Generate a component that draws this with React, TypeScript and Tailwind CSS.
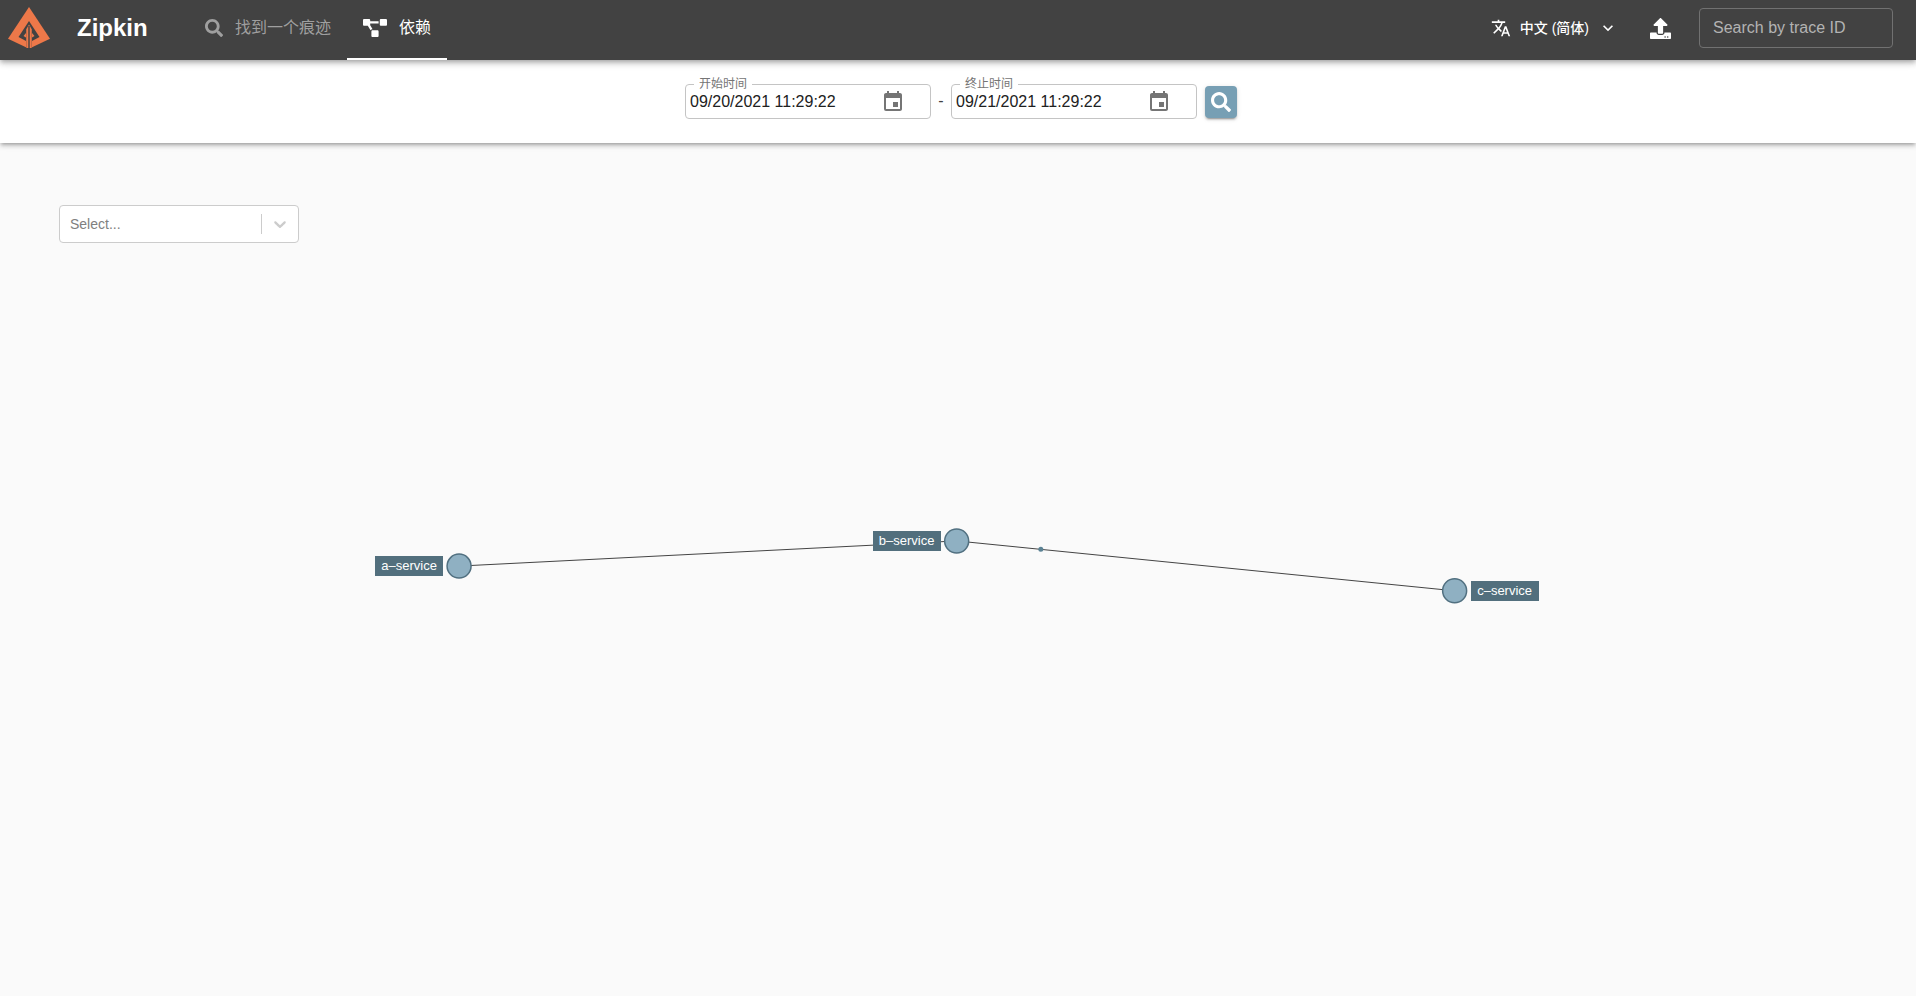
import { FaProjectDiagram, FaSearch, FaUpload } from "react-icons/fa";
import { MdEvent, MdExpandMore, MdTranslate } from "react-icons/md";

type ServiceNode = { name: string; x: number; y: number; side: "left" | "right" };

const nodes: ServiceNode[] = [
  { name: "a–service", x: 23.96, y: 49.6, side: "left" },
  { name: "b–service", x: 49.93, y: 46.65, side: "left" },
  { name: "c–service", x: 75.92, y: 52.5, side: "right" },
];

const edges: [number, number][] = [
  [0, 1],
  [1, 2],
];

function Logo() {
  return (
    <svg viewBox="0 0 42 42" className="h-[42px] w-[42px] shrink-0" aria-hidden="true">
      <path fill="#ed7849" d="M21 0 L42 31.8 L22.5 41 H19.5 L0 31.8 Z" />
      <path fill="#424242" d="M21 14 L31.5 30 L24 34 V30.5 L26.5 29 L24 26 V41 H23.4 V22 H18.6 V41 H18 V26 L15.5 29 L18 30.5 V34 L10.5 30 Z" />
      <path fill="#ed7849" d="M21 17.5 L23.6 22 V41 H18.4 V22 Z" />
      <path fill="#424242" d="M20.3 19 H21.7 V41 H20.3 Z" />
    </svg>
  );
}

function DateField({ id, label, value }: { id: string; label: string; value: string }) {
  return (
    <fieldset className="w-[246px] rounded border border-[#c4c4c4] px-1 pb-1">
      <legend className="ml-1 px-[5px] text-xs leading-3 text-[#757575]">
        <label htmlFor={id} className="block">{label}</label>
      </legend>
      <div className="flex h-6 items-center justify-between pr-[21px]">
        <input id={id} defaultValue={value} className="w-40 bg-transparent text-base text-[#212121] outline-none" />
        <button type="button" aria-label={label} className="text-[#757575]">
          <MdEvent size={24} />
        </button>
      </div>
    </fieldset>
  );
}

function Header() {
  return (
    <header className="relative z-20 flex h-[60px] items-stretch bg-[#424242] pr-[23px] pl-2 text-white shadow-[0_2px_4px_-1px_rgba(0,0,0,0.2),0_4px_5px_0_rgba(0,0,0,0.14),0_1px_10px_0_rgba(0,0,0,0.12)]">
      <div className="flex items-center pb-1">
        <Logo />
        <h1 className="ml-[27px] w-28 text-2xl font-bold">Zipkin</h1>
      </div>
      <nav className="flex flex-1 text-base">
        <a href="#find" className="flex items-center gap-3 px-4 pb-1 text-[#9f9f9f]">
          <FaSearch size={18} />
          找到一个痕迹
        </a>
        <a href="#dependency" className="flex items-center gap-3 border-b-2 border-white px-4 pb-0.5">
          <FaProjectDiagram size={24} className="h-[18px] w-6" preserveAspectRatio="none" />
          依赖
        </a>
      </nav>
      <div className="flex items-center pb-1">
        <button type="button" className="flex items-center gap-[9px] text-sm font-medium">
          <MdTranslate size={20} />
          <span>中文 (简体)</span>
          <MdExpandMore size={20} />
        </button>
        <button type="button" aria-label="Upload" className="mr-7 ml-8">
          <FaUpload size={21} />
        </button>
        <input
          aria-label="Search by trace ID"
          placeholder="Search by trace ID"
          className="h-10 w-[194px] rounded border border-[#717171] bg-transparent px-[13px] text-base outline-none placeholder:text-[#b3b3b3]"
        />
      </div>
    </header>
  );
}

function ServiceFilter() {
  return (
    <div className="relative z-10 h-[38px] w-60">
      <select
        aria-label="Service"
        defaultValue=""
        className="h-full w-full appearance-none rounded border border-[#cccccc] bg-white px-2.5 text-sm text-[#808080] outline-none"
      >
        <option value="">Select...</option>
        {nodes.map((node) => (
          <option key={node.name}>{node.name}</option>
        ))}
      </select>
      <div className="pointer-events-none absolute inset-y-0 right-0 flex items-center gap-2 pr-[9px]">
        <span className="h-5 w-px bg-[#cccccc]" />
        <svg viewBox="0 0 20 20" className="h-5 w-5 fill-[#cccccc]" aria-hidden="true">
          <path d="M4.516 7.548c0.436-0.446 1.043-0.481 1.576 0l3.908 3.747 3.908-3.747c0.533-0.481 1.141-0.446 1.574 0 0.436 0.445 0.408 1.197 0 1.615-0.406 0.418-4.695 4.502-4.695 4.502-0.217 0.223-0.502 0.335-0.787 0.335s-0.57-0.112-0.789-0.335c0 0-4.287-4.084-4.695-4.502s-0.436-1.17 0-1.615z" />
        </svg>
      </div>
    </div>
  );
}

function DependencyGraph() {
  const from = nodes[1];
  const to = nodes[2];
  const progress = 0.169;
  return (
    <div className="absolute inset-0">
      <svg className="h-full w-full" aria-hidden="true">
        {edges.map(([a, b]) => (
          <line
            key={`${a}-${b}`}
            x1={`${nodes[a].x}%`}
            y1={`${nodes[a].y}%`}
            x2={`${nodes[b].x}%`}
            y2={`${nodes[b].y}%`}
            stroke="#444444"
            strokeWidth="1"
          />
        ))}
        <circle
          cx={`${from.x + (to.x - from.x) * progress}%`}
          cy={`${from.y + (to.y - from.y) * progress}%`}
          r="2.5"
          fill="#5b8294"
        />
        {nodes.map((node) => (
          <circle key={node.name} cx={`${node.x}%`} cy={`${node.y}%`} r="12" fill="#8fb0c2" stroke="#517080" strokeWidth="1.5" />
        ))}
      </svg>
      {nodes.map((node) => (
        <div
          key={node.name}
          className="absolute h-0 w-0"
          style={{ left: `${node.x}%`, top: `${node.y}%` }}
        >
          <span
            className={
              node.side === "left"
                ? "absolute -top-2.5 right-4 flex h-5 w-[68px] items-center justify-center bg-[#526f7d] text-[13px] text-white"
                : "absolute -top-2.5 left-4 flex h-5 w-[68px] items-center justify-center bg-[#526f7d] text-[13px] text-white"
            }
          >
            {node.name}
          </span>
        </div>
      ))}
    </div>
  );
}

export default function App() {
  return (
    <div className="flex min-h-screen flex-col bg-[#fafafa] font-['Liberation_Sans','Noto_Sans_CJK_SC',sans-serif]">
      <Header />
      <form
        onSubmit={(event) => event.preventDefault()}
        className="relative z-10 flex items-end justify-center bg-white pt-[18px] pb-6 pl-1.5 shadow-[0_3px_3px_-2px_rgba(0,0,0,0.2),0_3px_4px_0_rgba(0,0,0,0.14),0_1px_8px_0_rgba(0,0,0,0.12)]"
      >
        <DateField id="start" label="开始时间" value="09/20/2021 11:29:22" />
        <span className="w-5 pb-1.5 text-center text-[#424242]">-</span>
        <DateField id="end" label="终止时间" value="09/21/2021 11:29:22" />
        <button
          type="submit"
          aria-label="Search"
          className="mb-px ml-2 flex h-8 w-8 items-center justify-center rounded bg-[#779fb4] text-white shadow-[0_3px_1px_-2px_rgba(0,0,0,0.2),0_2px_2px_0_rgba(0,0,0,0.14),0_1px_5px_0_rgba(0,0,0,0.12)]"
        >
          <FaSearch size={20} />
        </button>
      </form>
      <main className="relative flex-1 px-[59px] py-[62px]">
        <DependencyGraph />
        <ServiceFilter />
      </main>
    </div>
  );
}
